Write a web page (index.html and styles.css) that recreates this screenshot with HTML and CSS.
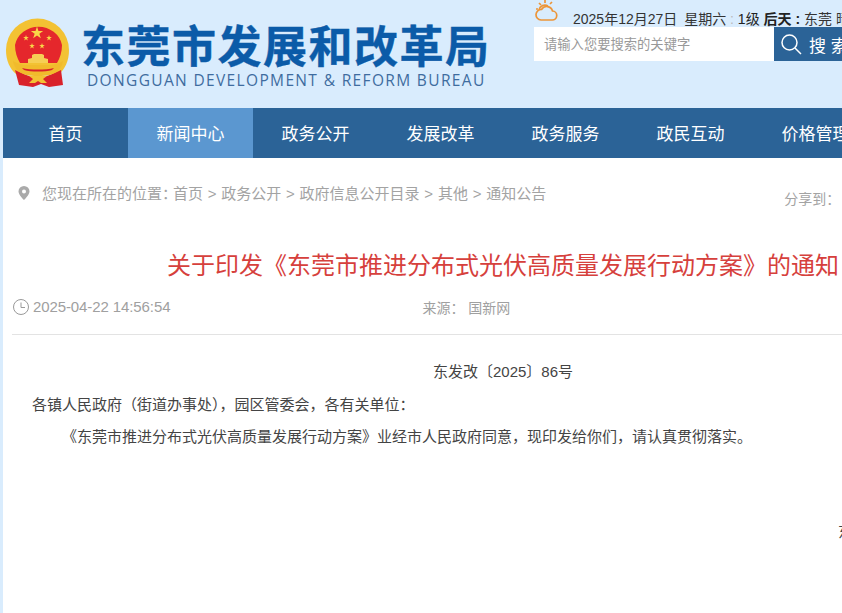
FILE: index.html

```html
<!DOCTYPE html>
<html lang="zh-CN">
<head>
    <meta charset="UTF-8">
    <title>关于印发《东莞市推进分布式光伏高质量发展行动方案》的通知</title>
    <link rel="stylesheet" href="styles.css">
</head>
<body>
    <div class="page">
        <div class="header">
            <div class="logo">
                <svg class="emblem" width="66" height="70" viewBox="0 0 66 70">
                    <defs>
                        <path id="star" d="M0-1 .225-.31.95-.31.36.12.59.81 0 .38-.59.81-.36.12-.95-.31-.225-.31z" fill="#f9d648"/>
                    </defs>
                    <!-- gold ring -->
                    <path d="M1 32a31.500 31.500 0 0 1 63 0c0 11-4 19-10 24H11C5 51 1 43 1 32z" fill="#f3c233"/>
                    <!-- red disc -->
                    <path d="M10 27a24 23 0 0 1 47 0c0 7-2 13-5 18H15c-3-5-5-11-5-18z" fill="#e5272c"/>
                    <use href="#star" transform="translate(32 15) scale(6.500)"/>
                    <use href="#star" transform="translate(21 20) scale(3)"/>
                    <use href="#star" transform="translate(44 20) scale(3)"/>
                    <use href="#star" transform="translate(27 28) scale(3)"/>
                    <use href="#star" transform="translate(37 28) scale(3)"/>
                    <!-- gate -->
                    <path d="M23 45v-4l4-1v-3l2-1h8l2 1v3l4 1v4z" fill="#f6cf55"/>
                    <!-- ribbons -->
                    <path d="M10 52l4 2 10 4h18l10-4 4-2 2 15-14 2-8-3-8 3-14-2z" fill="#d9222a"/>
                    <!-- wreath band -->
                    <path d="M8 43c5 3 8 3 12 4h26c4-1 7-1 12-4-1 7-6 12-13 14-5 1.500-19 1.500-24 0-7-2-12-7-13-14z" fill="#f1bb2c"/>
                    <path d="M17 50c8 2 24 2 32 0l-2 2c-7 2-21 2-28 0z" fill="#d9222a"/>
                    <path d="M24 58h18l-4 3 4 4h-6l-3-2-3 2h-6l4-4z" fill="#f3c233"/>
                </svg>
                <div class="logo-text">
                    <div class="logo-cn">东莞市发展和改革局</div>
                    <div class="logo-en">DONGGUAN DEVELOPMENT &amp; REFORM BUREAU</div>
                </div>
            </div>
            <div class="top-right">
                <div class="weather">
                    <svg class="weather-icon" width="26" height="22" viewBox="0 0 26 22" fill="none" stroke="#ec9539" stroke-width="1.700">
                        <path d="M7 20h11a4.500 4.500 0 0 0 .5-9 6 6 0 0 0-11-1.500A5 5 0 0 0 7 20z"/>
                        <path d="M5 10a6 6 0 0 1 9-4M11 0v3M5 3l2 2M18 2l-2 2M2 9h2"/>
                    </svg>
                    <div class="weather-text"><span class="today">2025年12月27日</span> 星期六<span class="colon"> : </span><b class="level">1级</b> <b>后天 :</b> 东莞 晴</div>
                </div>
                <div class="search">
                    <div class="search-input">请输入您要搜索的关键字</div>
                    <div class="search-btn">
                        <svg width="22" height="22" viewBox="0 0 22 22" fill="none" stroke="#fff" stroke-width="1.500">
                            <circle cx="9.500" cy="9.500" r="7.500"/>
                            <path d="M15 15l6 6"/>
                        </svg>
                        <span>搜 索</span>
                    </div>
                </div>
            </div>
        </div>

        <div class="nav">
            <a class="nav-item">首页</a>
            <a class="nav-item active">新闻中心</a>
            <a class="nav-item">政务公开</a>
            <a class="nav-item">发展改革</a>
            <a class="nav-item">政务服务</a>
            <a class="nav-item">政民互动</a>
            <a class="nav-item">价格管理</a>
        </div>

        <div class="content">
            <div class="crumbs">
                <svg class="pin" width="12" height="14" viewBox="0 0 12 14">
                    <path d="M6 0a5.500 5.500 0 0 1 5.500 5.500C11.500 9 6 14 6 14S.5 9 .5 5.500A5.500 5.500 0 0 1 6 0zm0 3.500a2 2 0 1 0 0 4 2 2 0 0 0 0-4z" fill="#aaa" fill-rule="evenodd"/>
                </svg>
                <span class="crumb-lead">您现在所在的位置：</span>
                <span class="crumb-links">首页 &gt; 政务公开 &gt; 政府信息公开目录 &gt; 其他 &gt; 通知公告</span>
                <span class="share">分享到：</span>
            </div>
            <h1 class="title">关于印发《东莞市推进分布式光伏高质量发展行动方案》的通知</h1>
            <div class="meta">
                <svg class="clock" width="16" height="16" viewBox="0 0 16 16" fill="none" stroke="#999" stroke-width="1">
                    <circle cx="8" cy="8" r="7.500"/>
                    <path d="M8 3.500V8.500H12"/>
                </svg>
                <span class="date">2025-04-22 14:56:54</span>
                <span class="source">来源： 国新网</span>
            </div>
            <div class="article">
                <p class="doc-no">东发改〔2025〕86号</p>
                <p class="to">各镇人民政府（街道办事处），园区管委会，各有关单位：</p>
                <p class="body-text">《东莞市推进分布式光伏高质量发展行动方案》业经市人民政府同意，现印发给你们，请认真贯彻落实。</p>
                <p class="sign">东莞市发展和改革局</p>
            </div>
        </div>
    </div>
</body>
</html>
```

FILE: styles.css

```css
html, body {
    margin: 0;
    height: 100%;
    overflow: hidden;
}
body {
    font-family: "Liberation Sans", "Noto Sans CJK SC", sans-serif;
    background-color: #d9ecfd;
}
.page {
    width: 1100px;
    height: 613px;
    overflow: hidden;
}
.header {
    display: flex;
    height: 108px;
}
.logo {
    display: flex;
    width: 534px;
    padding: 18px 0 0 5px;
    box-sizing: border-box;
}
.emblem {
    flex-shrink: 0;
}
.logo-text {
    margin-left: 10px;
}
.logo-cn {
    margin-top: 5px;
    font-size: 44px;
    line-height: 49px;
    font-weight: bold;
    letter-spacing: 1.500px;
    color: #0b5ba8;
    white-space: nowrap;
    -webkit-text-stroke: 0.4px #0b5ba8;
}
.logo-en {
    margin-left: 6px;
    font-family: "Open Sans", sans-serif;
    font-size: 15.500px;
    line-height: 16px;
    letter-spacing: 1.350px;
    color: #3f6c9f;
    white-space: nowrap;
}
.weather {
    display: flex;
    height: 27px;
}
.weather-icon {
    flex-shrink: 0;
}
.weather-text {
    margin: 10px 0 0 13px;
    font-size: 14px;
    line-height: 18px;
    color: #333;
    white-space: nowrap;
}
.weather-text b {
    color: #222;
}
.today {
    margin-right: 3px;
}
.colon {
    color: #bbb;
}
.level {
    font-weight: normal;
}
.search {
    display: flex;
    height: 34px;
}
.search-input {
    width: 240px;
    padding-left: 10px;
    box-sizing: border-box;
    background: #fff;
    font-size: 13.300px;
    line-height: 35px;
    color: #999;
}
.search-btn {
    display: flex;
    align-items: center;
    gap: 7px;
    width: 100px;
    padding-left: 6px;
    box-sizing: border-box;
    background: #2b6397;
    font-size: 17px;
    color: #fff;
}
.nav {
    display: flex;
    margin-left: 3px;
    height: 50px;
    background: #2b6397;
}
.nav-item {
    width: 125px;
    height: 50px;
    flex-shrink: 0;
    text-align: center;
    font-size: 17px;
    line-height: 54px;
    color: #fff;
}
.nav-item.active {
    background: #5b97d0;
}
.content {
    margin-left: 3px;
    height: 455px;
    background: #fff;
}
.crumbs {
    display: flex;
    align-items: flex-start;
    padding: 27px 0 0 15px;
    height: 45px;
    font-size: 15px;
    line-height: 18px;
    color: #a3a3a3;
    white-space: nowrap;
}
.pin {
    margin-top: 1px;
}
.crumb-lead {
    margin-left: 12px;
}
.crumb-links {
    margin-left: -4px;
    word-spacing: 0.600px;
}
.share {
    margin: 5px 0 0 238px;
    font-size: 14px;
}
.title {
    width: 1000px;
    margin: 0;
    padding-top: 19px;
    text-align: center;
    font-size: 24px;
    line-height: 34px;
    font-weight: normal;
    color: #d6403c;
}
.meta {
    display: flex;
    align-items: center;
    margin-left: 9px;
    padding: 10px 0 14px;
    height: 27px;
    border-bottom: 1px solid #e3e3e3;
    font-size: 15px;
    color: #a0a0a0;
}
.clock {
    margin-left: 1px;
}
.date {
    margin-left: 4px;
    letter-spacing: -0.100px;
}
.source {
    margin-left: 252px;
    font-size: 14px;
}
.article {
    color: #444;
    font-size: 15px;
    line-height: 24px;
}
.article p {
    margin: 0;
}
.doc-no {
    width: 1000px;
    padding-top: 25px;
    text-align: center;
}
.to {
    padding: 9px 0 0 29px;
}
.body-text {
    padding: 8px 0 0 29px;
    text-indent: 2em;
}
.sign {
    padding: 71px 0 0 835px;
    white-space: nowrap;
}
```
